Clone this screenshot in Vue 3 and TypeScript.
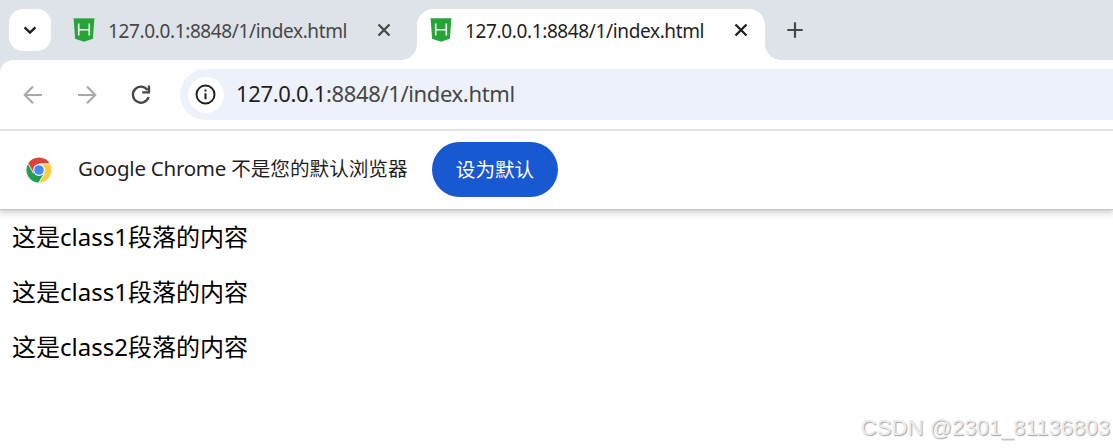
<script setup lang="ts">
interface Tab {
  title: string
  active: boolean
}

const tabs: Tab[] = [
  { title: '127.0.0.1:8848/1/index.html', active: false },
  { title: '127.0.0.1:8848/1/index.html', active: true },
]

const host = '127.0.0.1'
const path = ':8848/1/index.html'

const paragraphs: string[] = ['class1', 'class1', 'class2']
</script>

<template>
  <div class="browser">
    <header class="tab-strip">
      <button class="tab-search" aria-label="Search tabs">
        <svg width="42" height="42" viewBox="0 0 42 42">
          <path d="M15.6 18.3 21 23.6l5.4-5.3" fill="none" stroke="#1f1f1f" stroke-width="2.4" />
        </svg>
      </button>
      <div v-for="(tab, i) in tabs" :key="i" class="tab" :class="{ active: tab.active }">
        <svg class="favicon" width="22" height="24" viewBox="0 0 22 24">
          <path d="M.6.5h20.8l-1.5 20.2L11 23.7l-8.9-3z" fill="#25a536" />
          <path d="M.6.5h20.8" stroke="#65bd70" />
          <path d="M5.7 5.5v12M16.3 5.5v12M5.7 11.7h10.6" fill="none" stroke="#f4fff5" stroke-width="1.6" />
        </svg>
        <span class="title">{{ tab.title }}</span>
        <svg class="close" width="14" height="14" viewBox="0 0 14 14">
          <path d="M1.5 1.5l11 11M12.5 1.5l-11 11" stroke="currentColor" stroke-width="2.3" />
        </svg>
      </div>
      <svg class="new-tab" width="16" height="16" viewBox="0 0 16 16">
        <path d="M8 .3v15.4M.3 8h15.4" stroke="#474747" stroke-width="2.2" />
      </svg>
    </header>

    <nav class="toolbar">
      <svg width="20" height="20" viewBox="0 0 20 20" class="nav-icon">
        <path d="M19 10H2.3M10 1.6l-8.3 8.4 8.3 8.3" fill="none" stroke="#a9a9a9" stroke-width="2.1" />
      </svg>
      <svg width="20" height="20" viewBox="0 0 20 20" class="nav-icon">
        <path d="M1 10h16.7M10 1.6l8.3 8.4-8.3 8.3" fill="none" stroke="#a9a9a9" stroke-width="2.1" />
      </svg>
      <svg width="20" height="20" viewBox="0 0 20 20" class="nav-icon">
        <path d="M16.6 5.2A8 8 0 1 0 17.6 12" fill="none" stroke="#474747" stroke-width="2.4" />
        <path d="M18 .6v6.7h-6.8" fill="none" stroke="#474747" stroke-width="2.3" />
      </svg>
      <div class="address">
        <span class="site-info">
          <svg width="36" height="36" viewBox="0 0 36 36">
            <circle cx="17.5" cy="17.5" r="9" fill="none" stroke="#1f1f1f" stroke-width="2" />
            <path d="M17.5 16.3v6M17.5 12.5v2.1" stroke="#1f1f1f" stroke-width="2" />
          </svg>
        </span>
        <span class="url"><b>{{ host }}</b>{{ path }}</span>
      </div>
    </nav>

    <section class="infobar">
      <svg class="chrome" width="26" height="26" viewBox="0 0 26 26">
        <path d="M2.1 6.7A12.6 12.6 0 0 0 13 25.6l5.5-9.4L13 13 7.5 16.2z" fill="#1e9e58" />
        <path d="M23.9 6.7A12.6 12.6 0 0 1 13 25.6l5.5-9.4L13 6.7z" fill="#ffcb42" />
        <path d="M2.1 6.7A12.6 12.6 0 0 1 23.9 6.7H13L7.5 16.2z" fill="#db4437" />
        <path d="M2.1 6.7 7.5 16.2M23.9 6.9H13M12.8 25.6l5.7-9.4" stroke="#fff" stroke-width=".8" />
        <circle cx="13" cy="13" r="5.9" fill="#fff" />
        <circle cx="13" cy="13" r="4.8" fill="#4688f4" />
      </svg>
      <span class="message"><span class="latin">Google Chrome </span>不是您的默认浏览器</span>
      <button class="set-default">设为默认</button>
    </section>

    <main class="page">
      <p v-for="(name, i) in paragraphs" :key="i">这是<span>{{ name }}</span>段落的内容</p>
    </main>
    <div class="watermark">CSDN @2301_81136803</div>
  </div>
</template>

<style>
body {
  margin: 0;
  background: #fff;
}
</style>

<style scoped>
.browser {
  position: relative;
  width: 1113px;
  height: 448px;
  overflow: hidden;
  background: #fff;
  font-family: 'Noto Sans', 'Noto Sans CJK SC', sans-serif;
}
svg {
  display: block;
  flex: none;
}
button {
  border: 0;
  padding: 0;
  font-family: inherit;
}
.tab-strip {
  display: flex;
  height: 60px;
  padding: 9px 0 0 9px;
  box-sizing: border-box;
  background: #dee2e9;
}
.tab-search {
  width: 42px;
  height: 42px;
  border-radius: 14px;
  background: #fff;
}
.tab {
  position: relative;
  display: flex;
  width: 348px;
  height: 51px;
  margin-left: 9px;
  box-sizing: border-box;
  padding: 0 0 0 13px;
  color: #474747;
}
.tab.active {
  background: #fff;
  border-radius: 16px 16px 0 0;
  color: #1f1f1f;
}
.tab.active::before,
.tab.active::after {
  content: '';
  position: absolute;
  bottom: 0;
  width: 16px;
  height: 16px;
}
.tab.active::before {
  left: -16px;
  background: radial-gradient(circle at 0 0, transparent 15.5px, #fff 16.2px);
}
.tab.active::after {
  right: -16px;
  background: radial-gradient(circle at 100% 0, transparent 15.5px, #fff 16.2px);
}
.favicon {
  margin-top: 9px;
}
.title {
  width: 240px;
  margin-left: 13px;
  font-size: 19px;
  line-height: 44px;
  letter-spacing: -0.37px;
  white-space: nowrap;
}
.close {
  margin: 14px 0 0 29px;
}
.new-tab {
  margin: 13px 0 0 22px;
}
.toolbar {
  position: relative;
  display: flex;
  align-items: center;
  height: 69px;
  padding-left: 23px;
  box-sizing: border-box;
  background: #fff;
  border-radius: 13px 0 0 0;
  box-shadow: -14px -14px 0 0 #dee2e9;
  clip-path: inset(0);
  gap: 34px;
}
.address {
  display: flex;
  align-items: center;
  flex: 1;
  height: 51px;
  margin-left: -5px;
  background: #ecf1fa;
  border-radius: 26px 0 0 26px;
}
.site-info {
  width: 36px;
  height: 36px;
  margin-left: 8px;
  border-radius: 50%;
  background: #fff;
}
.url {
  margin-left: 12px;
  padding-bottom: 3px;
  font-size: 22px;
  letter-spacing: -0.36px;
  line-height: 48px;
  color: #474747;
  white-space: nowrap;
}
.url b {
  font-weight: 400;
  color: #1f1f1f;
}
.infobar {
  display: flex;
  align-items: center;
  height: 80px;
  padding: 0 0 1px 26px;
  box-sizing: border-box;
  border-top: 2px solid #e1e2e2;
  background: #fff;
  box-shadow: 0 1px 1px #c4c7c6, 0 2px 7px 1px rgba(60, 70, 66, 0.3);
}
.message {
  width: 330px;
  margin-left: 26px;
  padding-bottom: 2px;
  font-size: 19.6px;
  line-height: 40px;
  color: #1f1f1f;
  white-space: nowrap;
}
.latin {
  font-size: 20.5px;
  letter-spacing: -0.25px;
  white-space: pre;
}
.set-default {
  width: 126px;
  height: 55px;
  margin-left: 24px;
  padding-bottom: 2px;
  border-radius: 28px;
  background: #1858d0;
  color: #fff;
  font-size: 19.6px;
}
.page {
  padding: 10px 12px;
  color: #000;
}
.page p {
  height: 36px;
  margin: 0 0 19px;
  font-size: 24px;
  line-height: 36px;
}
.watermark {
  position: absolute;
  right: 3px;
  bottom: 7px;
  font: 22px/26px 'Liberation Sans', sans-serif;
  letter-spacing: 0.05px;
  color: #ececec;
  text-shadow: 1px 1px 1px #a4a4a4;
  white-space: nowrap;
}
</style>
